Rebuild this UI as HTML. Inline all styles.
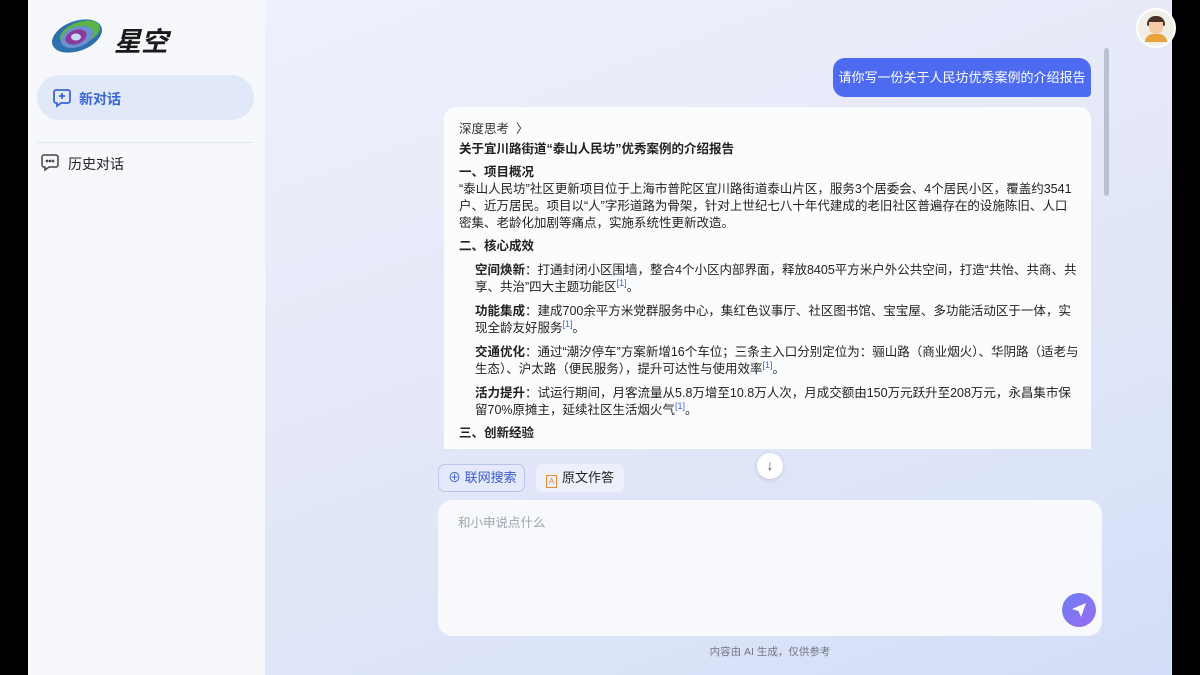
<!DOCTYPE html>
<html><head><meta charset="utf-8"><style>
*{margin:0;padding:0;box-sizing:border-box}
body{width:1200px;height:675px;overflow:hidden;background:#000;font-family:"Liberation Sans","Noto Sans CJK SC",sans-serif;position:relative}
#side{position:absolute;left:28px;top:0;width:237px;height:675px;background:#f6f8fc}
#main{position:absolute;left:265px;top:0;width:907px;height:675px;background:linear-gradient(160deg,#eef0fb 0%,#e6e9f8 40%,#dce4f8 75%,#d3ddf7 100%)}
.abs{position:absolute}
.card{left:179px;top:107px;width:647px;height:342px;background:#fbfcfe;border-radius:12px 12px 0 0;overflow:hidden;padding:14px 12px 14px 15px;font-size:12.5px;color:#222;line-height:17px}
.card p{margin:0}
.card .h{font-weight:bold;margin-top:6px}
.card .ind{padding-left:16px;margin-top:7px}
sup{color:#3b63e0;font-size:9px;line-height:0}
</style></head><body>
<div id="side">
 <svg class="abs" style="left:22px;top:16px" width="54" height="40" viewBox="0 0 54 40">
  <ellipse cx="27" cy="20" rx="26" ry="15" transform="rotate(-20 27 20)" fill="#2e6fae"/>
  <ellipse cx="30" cy="17" rx="21" ry="11" transform="rotate(-20 30 17)" fill="#5bb24a"/>
  <ellipse cx="27" cy="21" rx="17" ry="10" transform="rotate(-20 27 21)" fill="#6c8fd0"/>
  <ellipse cx="26" cy="21" rx="11" ry="7" transform="rotate(-20 26 21)" fill="#8a3a9a"/>
  <ellipse cx="26" cy="21" rx="5" ry="3.5" fill="#c9d8f0"/>
 </svg>
 <div class="abs" style="left:86px;top:20px;font-size:27px;font-weight:bold;font-style:italic;color:#1a1a1a">星空</div>
 <div class="abs" style="left:9px;top:75px;width:217px;height:45px;border-radius:23px;background:#e1e9f8"></div>
 <svg class="abs" style="left:24px;top:88px" width="20" height="20" viewBox="0 0 20 20" fill="none" stroke="#3a66d6" stroke-width="1.8"><path d="M4 2h12a2 2 0 0 1 2 2v9a2 2 0 0 1-2 2H9l-4 3v-3H4a2 2 0 0 1-2-2V4a2 2 0 0 1 2-2z"/><path d="M10 5v6M7 8h6"/></svg>
 <div class="abs" style="left:51px;top:89px;font-size:14px;font-weight:bold;color:#3a66d6">新对话</div>
 <div class="abs" style="left:9px;top:142px;width:216px;height:1px;background:#e3e7ef"></div>
 <svg class="abs" style="left:12px;top:153px" width="20" height="20" viewBox="0 0 20 20" fill="none" stroke="#444" stroke-width="1.5"><path d="M4 2h12a2 2 0 0 1 2 2v8a2 2 0 0 1-2 2H9l-4 3v-3H4a2 2 0 0 1-2-2V4a2 2 0 0 1 2-2z"/><circle cx="7" cy="8" r=".6"/><circle cx="10" cy="8" r=".6"/><circle cx="13" cy="8" r=".6"/></svg>
 <div class="abs" style="left:40px;top:154px;font-size:14px;color:#222">历史对话</div>
</div>
<div id="main">
 <div class="abs" style="left:871px;top:8px;width:40px;height:40px;border-radius:50%;background:#f2efe9;border:2px solid #fff"></div>
 <div class="abs" style="left:882px;top:16px;width:18px;height:10px;border-radius:9px 9px 2px 2px;background:#4a3428"></div>
 <div class="abs" style="left:884px;top:22px;width:14px;height:12px;border-radius:0 0 7px 7px;background:#f5c9a4"></div>
 <div class="abs" style="left:880px;top:34px;width:22px;height:8px;border-radius:8px 8px 0 0;background:#e9a33f"></div>
 <div class="abs" style="left:839px;top:48px;width:5px;height:148px;border-radius:3px;background:#b9c0d2"></div>
 <div class="abs" style="left:568px;top:58px;width:258px;height:39px;border-radius:12px 12px 4px 12px;background:#4d6bf0;color:#fff;font-size:13px;line-height:39px;text-align:center">请你写一份关于人民坊优秀案例的介绍报告</div>
 <div class="abs card">
  <p style="color:#333">深度思考 &nbsp;〉</p>
  <p style="font-weight:bold;margin-top:3px">关于宜川路街道“泰山人民坊”优秀案例的介绍报告</p>
  <p class="h">一、项目概况</p>
  <p>“泰山人民坊”社区更新项目位于上海市普陀区宜川路街道泰山片区，服务3个居委会、4个居民小区，覆盖约3541户、近万居民。项目以“人”字形道路为骨架，针对上世纪七八十年代建成的老旧社区普遍存在的设施陈旧、人口密集、老龄化加剧等痛点，实施系统性更新改造。</p>
  <p class="h">二、核心成效</p>
  <p class="ind"><b>空间焕新</b>：打通封闭小区围墙，整合4个小区内部界面，释放8405平方米户外公共空间，打造“共怡、共商、共享、共治”四大主题功能区<sup>[1]</sup>。</p>
  <p class="ind"><b>功能集成</b>：建成700余平方米党群服务中心，集红色议事厅、社区图书馆、宝宝屋、多功能活动区于一体，实现全龄友好服务<sup>[1]</sup>。</p>
  <p class="ind"><b>交通优化</b>：通过“潮汐停车”方案新增16个车位；三条主入口分别定位为：骊山路（商业烟火）、华阴路（适老与生态）、沪太路（便民服务），提升可达性与使用效率<sup>[1]</sup>。</p>
  <p class="ind"><b>活力提升</b>：试运行期间，月客流量从5.8万增至10.8万人次，月成交额由150万元跃升至208万元，永昌集市保留70%原摊主，延续社区生活烟火气<sup>[1]</sup>。</p>
  <p class="h">三、创新经验</p>
  <p class="ind"><b>多方联动</b>：融合居民议事会、设计师、企业、物业、街道、社会组织等多方力量，理顺协同机制<sup>[1]</sup></p>
 </div>
 <div class="abs" style="left:492px;top:453px;width:26px;height:26px;border-radius:50%;background:#fff;box-shadow:0 1px 4px rgba(0,0,0,.15);text-align:center;line-height:25px;font-size:14px;color:#555">↓</div>
 <div class="abs" style="left:173px;top:464px;width:87px;height:28px;border-radius:7px;background:#e4eafb;border:1px solid #b8c6ec;color:#3a5bc8;font-size:13px;line-height:26px;padding-left:9px">⊕ 联网搜索</div>
 <div class="abs" style="left:271px;top:464px;width:88px;height:28px;border-radius:7px;background:#eef1fb;color:#222;font-size:13px;line-height:28px;padding-left:10px"><span style="display:inline-block;width:11px;height:13px;border:1px solid #e08a3c;font-size:8px;line-height:11px;text-align:center;color:#e08a3c;vertical-align:-2px;margin-right:5px">A</span>原文作答</div>
 <div class="abs" style="left:173px;top:500px;width:664px;height:136px;border-radius:14px;background:#f8f9fd"></div>
 <div class="abs" style="left:193px;top:512px;font-size:12.5px;color:#a0a4ad">和小申说点什么</div>
 <div class="abs" style="left:797px;top:593px;width:34px;height:34px;border-radius:50%;background:linear-gradient(135deg,#6b7ff5,#9a6cf0)"></div>
 <svg class="abs" style="left:805px;top:601px" width="18" height="18" viewBox="0 0 18 18" fill="#fff"><path d="M2 8L16 2 11 16 8.5 10z"/></svg>
 <div class="abs" style="left:0;top:644px;width:1010px;text-align:center;font-size:10.5px;color:#707684">内容由 AI 生成，仅供参考</div>
</div>
</body></html>
